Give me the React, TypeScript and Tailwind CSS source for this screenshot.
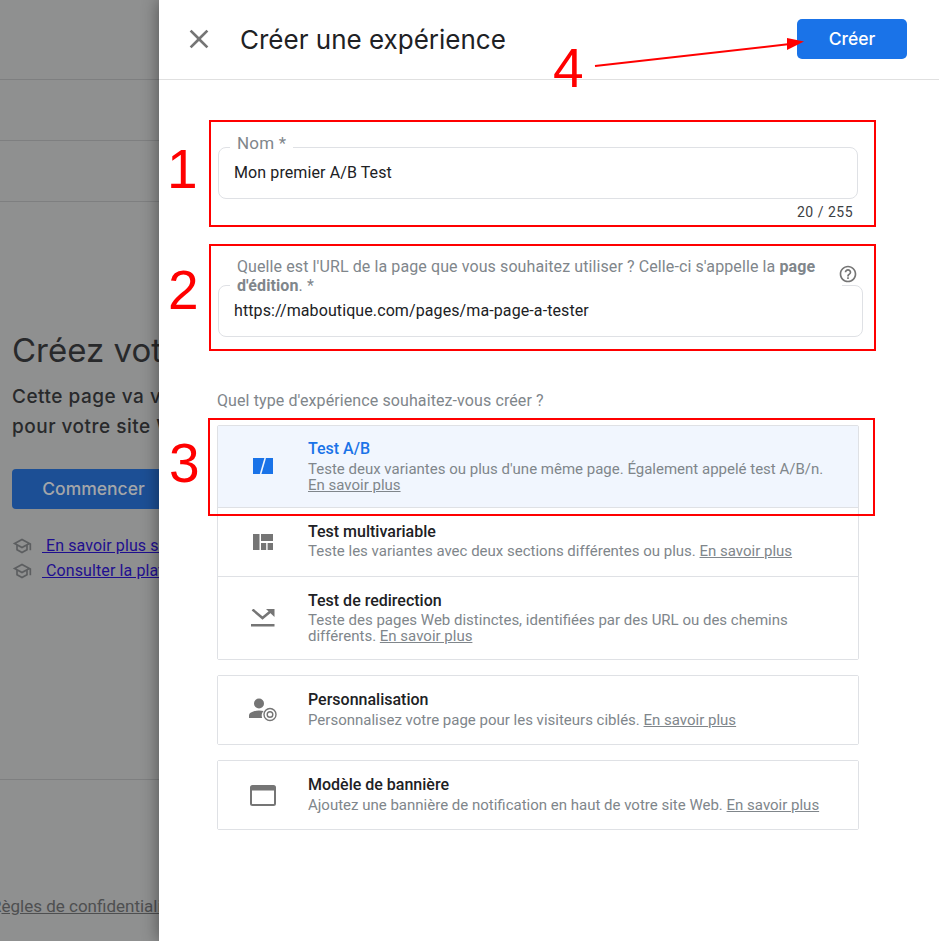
import { ReactNode } from "react";

const sans = "font-['Roboto',sans-serif]";
const display = "font-['Inter',sans-serif]";

function SchoolIcon() {
  return (
    <svg viewBox="0 0 24 24" className="h-[20px] w-[20px] shrink-0" fill="#5c5e60">
      <path d="M12 3L1 9l4 2.18v6L12 21l7-3.82v-6l2-1.09V17h2V9L12 3zm6.82 6L12 12.72 5.18 9 12 5.28 18.82 9zM17 15.99l-5 2.73-5-2.73v-3.72L12 15l5-2.73v3.72z" />
    </svg>
  );
}

function AbIcon() {
  return (
    <svg width="20" height="16" viewBox="0 0 20 16" className="mb-[1px]">
      <rect width="20" height="16" fill="#1a73e8" />
      <path d="M7.6 16L12.2 0" stroke="#f1f6fe" strokeWidth="1.6" />
    </svg>
  );
}

function QuiltIcon() {
  return (
    <svg width="20" height="16" viewBox="0 0 20 16" fill="#757575">
      <rect width="6.5" height="16" />
      <rect x="8" width="12" height="7" />
      <rect x="8" y="9" width="5.2" height="7" />
      <rect x="14.6" y="9" width="5.4" height="7" />
    </svg>
  );
}

function RedirectIcon() {
  return (
    <svg width="24" height="18" viewBox="0 0 24 18" fill="none">
      <path d="M1.5 0.5L11.5 9L20 2" stroke="#757575" strokeWidth="2.5" />
      <path d="M15 0H23.5V8z" fill="#757575" />
      <rect y="15" width="23.5" height="2.5" fill="#757575" />
    </svg>
  );
}

function PersonIcon() {
  return (
    <svg width="29" height="24" viewBox="0 0 29 24" fill="#757575">
      <circle cx="10" cy="5.5" r="5" />
      <path d="M0 20V17.5C0 14.5 5 12.5 10 12.5C11.6 12.5 13.2 12.7 14.6 13.1C12.8 14.8 12.2 17.6 13.2 20z" />
      <circle cx="21" cy="16.5" r="6" fill="none" stroke="#757575" strokeWidth="1.4" />
      <circle cx="21" cy="16.5" r="2.8" fill="none" stroke="#757575" strokeWidth="1.4" />
    </svg>
  );
}

function BannerIcon() {
  return (
    <svg width="26" height="21" viewBox="0 0 26 21" fill="none">
      <rect x="1" y="1" width="24" height="19" rx="1.5" stroke="#757575" strokeWidth="2" />
      <rect x="1" y="1" width="24" height="4.5" fill="#757575" />
    </svg>
  );
}

function Learn({ children }: { children: ReactNode }) {
  return <span className="cursor-pointer underline">{children}</span>;
}

interface ExperienceRowProps {
  icon: ReactNode;
  title: string;
  description: string;
  selected?: boolean;
  height: string;
  divider?: boolean;
}

function ExperienceRow({ icon, title, description, selected, height, divider }: ExperienceRowProps) {
  return (
    <div
      className={`flex ${height} ${divider ? "border-t border-[#dfe1e5]" : ""} ${selected ? "bg-[#f1f6fe]" : "bg-white"}`}
    >
      <div className="flex w-[90px] shrink-0 items-center justify-center">{icon}</div>
      <div className={`w-[530px] ${selected ? "pt-[13px]" : "pt-[14px]"}`}>
        <div className={`text-[16px] leading-[20px] font-medium ${selected ? "text-[#1a73e8]" : "text-[#202124]"}`}>
          {title}
        </div>
        <p className={`${divider ? "mt-[1px]" : "mt-[2px]"} text-[15px] leading-[16px] text-[#80868b]`}>
          {description} <Learn>En savoir plus</Learn>
        </p>
      </div>
    </div>
  );
}

function Annotations() {
  return (
    <div className="pointer-events-none absolute inset-0 z-20 font-['Liberation_Sans',sans-serif] text-[55px] leading-none text-[#ff0000]">
      <div className="absolute top-[120px] left-[209px] h-[107px] w-[667px] border-2 border-[#ff0000]" />
      <div className="absolute top-[244px] left-[209px] h-[107px] w-[667px] border-2 border-[#ff0000]" />
      <div className="absolute top-[418px] left-[208px] h-[98px] w-[667px] border-2 border-[#ff0000]" />
      <span className="absolute top-[142px] left-[167px]">1</span>
      <span className="absolute top-[263px] left-[168px]">2</span>
      <span className="absolute top-[436px] left-[169px]">3</span>
      <span className="absolute top-[41px] left-[553px]">4</span>
      <svg className="absolute top-[30px] left-[590px]" width="220" height="40" viewBox="0 0 220 40">
        <path d="M5 36L200 14" stroke="#ff0000" strokeWidth="2" />
        <path d="M214 11.5L197 8V20z" fill="#ff0000" />
      </svg>
    </div>
  );
}

export default function App() {
  return (
    <div className={`relative flex h-[941px] w-[939px] overflow-hidden bg-white ${sans}`}>
      {/* Page behind the panel */}
      <div className="flex h-full w-[159px] shrink-0 flex-col overflow-hidden bg-[#8f9090]">
        <div className="h-[80px] shrink-0 border-b border-[#7e7f80]" />
        <div className="h-[61px] shrink-0 border-b border-[#7e7f80]" />
        <div className="h-[61px] shrink-0 border-b border-[#7e7f80]" />
        <div className="h-[578px] w-[600px] shrink-0 border-b border-[#7e7f80] pt-[126px] pl-[12px]">
          <h1 className={`${display} text-[33px] leading-[44px] whitespace-nowrap text-[#28292b]`}>
            Créez votre première expérience
          </h1>
          <p className={`${display} mt-[10px] text-[19px] leading-[30px] font-medium tracking-[0.5px] whitespace-nowrap text-[#28292b]`}>
            Cette page va vous aider à créer une expérience
            <br />
            pour votre site Web
          </p>
          <div
            className={`${display} mt-[27px] flex h-[40px] w-[163px] items-center justify-center rounded-[4px] bg-[#1c4f95] text-[17.5px] font-medium text-[#a4a6a9]`}
          >
            Commencer
          </div>
          <div className="mt-[24px] flex h-[25px] items-center gap-[10px] text-[16px] tracking-[0.1px] whitespace-nowrap text-[#1f0f8f]">
            <SchoolIcon />
            <span className="underline">&nbsp;En savoir plus sur les expériences</span>
          </div>
          <div className="flex h-[25px] items-center gap-[10px] text-[16px] tracking-[0.1px] whitespace-nowrap text-[#1f0f8f]">
            <SchoolIcon />
            <span className="underline">&nbsp;Consulter la plateforme</span>
          </div>
        </div>
        <div className="mt-[114px] -ml-[9px] w-[400px] text-[17px] leading-[24px] whitespace-nowrap text-[#4e4f50]">
          R<span className="underline">ègles de confidentialité</span>
        </div>
      </div>

      {/* Create experience panel */}
      <div className="relative z-10 h-full flex-1 bg-white shadow-[0_0_16px_rgba(0,0,0,0.45)]">
        <header className="flex h-[80px] items-center border-b border-[#e0e0e0] pr-[32px]">
          <svg viewBox="0 0 24 24" className="ml-[24px] h-[32px] w-[32px] -translate-y-[1px]" fill="#757575">
            <path d="M19 6.41L17.59 5 12 10.59 6.41 5 5 6.41 10.59 12 5 17.59 6.41 19 12 13.41 17.59 19 19 17.59 13.41 12z" />
          </svg>
          <h2 className={`${display} ml-[25px] text-[26px] text-[#202124]`}>Créer une expérience</h2>
          <button
            className={`${display} ml-auto -mt-[1px] h-[40px] w-[110px] rounded-[5px] bg-[#1a73e8] text-[17.5px] font-medium text-white`}
          >
            Créer
          </button>
        </header>

        <div className="pl-[59px]">
          {/* Name */}
          <div className="relative mt-[67px] flex h-[52px] w-[640px] items-center rounded-[8px] border border-[#dfe1e5] pl-[15px] text-[16px] tracking-[0.1px] text-[#202124]">
            Mon premier A/B Test
            <span className="absolute -top-[17px] left-[11px] bg-white px-[7px] text-[17px] leading-[24px] tracking-[0.2px] text-[#80868b]">
              Nom *
            </span>
          </div>
          <div className="mt-[4px] w-[635px] text-right text-[14px] leading-[18px] tracking-[0.5px] text-[#3c4043]">
            20 / 255
          </div>

          {/* Page URL */}
          <div className="relative mt-[64px] flex h-[52px] w-[645px] items-center rounded-[8px] border border-[#dfe1e5] pl-[15px] text-[16px] tracking-[0.1px] text-[#202124]">
            https://maboutique.com/pages/ma-page-a-tester
            <label className="absolute -top-[29px] left-[11px] w-[612px] bg-white pl-[7px] text-[16px] leading-[19px] tracking-[0.1px] text-[#80868b]">
              Quelle est l'URL de la page que vous souhaitez utiliser ? Celle-ci s'appelle la{" "}
              <b className="font-bold">page d'édition</b>. *
            </label>
            <svg viewBox="0 0 24 24" className="absolute -top-[22px] right-[4px] h-[20px] w-[20px]" fill="#757575">
              <path d="M11 18h2v-2h-2v2zm1-16C6.48 2 2 6.48 2 12s4.48 10 10 10 10-4.48 10-10S17.52 2 12 2zm0 18c-4.41 0-8-3.59-8-8s3.59-8 8-8 8 3.59 8 8-3.59 8-8 8zm0-14c-2.21 0-4 1.79-4 4h2c0-1.1.9-2 2-2s2 .9 2 2c0 2-3 1.75-3 5h2c0-2.25 3-2.5 3-5 0-2.21-1.79-4-4-4z" />
            </svg>
          </div>

          {/* Experience type */}
          <div className="mt-[54px] -ml-[1px] text-[16px] leading-[20px] tracking-[0.1px] text-[#80868b]">
            Quel type d'expérience souhaitez-vous créer ?
          </div>
          <div className="mt-[14px] -ml-[1px] w-[642px]">
            <div className="rounded-[2px] border border-[#dfe1e5]">
              <ExperienceRow
                selected
                height="h-[81px]"
                icon={<AbIcon />}
                title="Test A/B"
                description="Teste deux variantes ou plus d'une même page. Également appelé test A/B/n."
              />
              <ExperienceRow
                divider
                height="h-[69px]"
                icon={<QuiltIcon />}
                title="Test multivariable"
                description="Teste les variantes avec deux sections différentes ou plus."
              />
              <ExperienceRow
                divider
                height="h-[83px]"
                icon={<RedirectIcon />}
                title="Test de redirection"
                description="Teste des pages Web distinctes, identifiées par des URL ou des chemins différents."
              />
            </div>
            <div className="mt-[15px] rounded-[2px] border border-[#dfe1e5]">
              <ExperienceRow
                height="h-[68px]"
                icon={<PersonIcon />}
                title="Personnalisation"
                description="Personnalisez votre page pour les visiteurs ciblés."
              />
            </div>
            <div className="mt-[15px] rounded-[2px] border border-[#dfe1e5]">
              <ExperienceRow
                height="h-[68px]"
                icon={<BannerIcon />}
                title="Modèle de bannière"
                description="Ajoutez une bannière de notification en haut de votre site Web."
              />
            </div>
          </div>
        </div>
      </div>

      <Annotations />
    </div>
  );
}
